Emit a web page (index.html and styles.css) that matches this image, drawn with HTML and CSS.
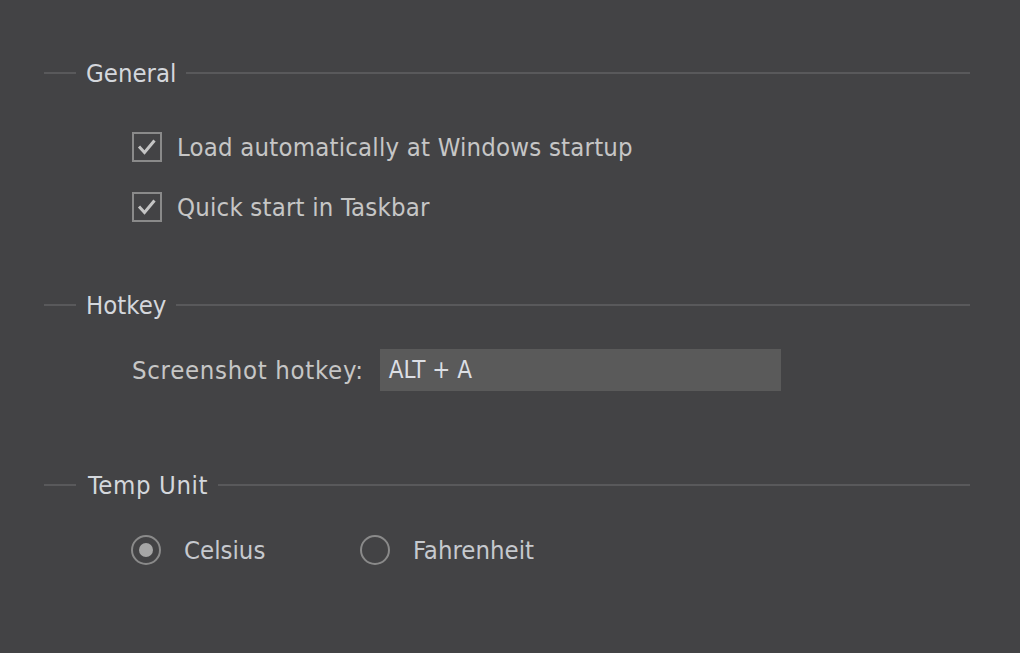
FILE: index.html
```html
<!DOCTYPE html>
<html>
<head>
<meta charset="utf-8">
<link rel="stylesheet" href="styles.css">
</head>
<body>
<div class="panel">
  <section class="group group-general">
    <div class="legend"><span>General</span></div>
    <div class="body">
      <label class="check"><span class="box"><svg viewBox="0 0 26 26" width="26" height="26"><path d="M5 12.5 L10.5 18.5 L20.5 6.5" fill="none" stroke="#c4c4c4" stroke-width="3"/></svg></span><span class="lbl">Load automatically at Windows startup</span></label>
      <label class="check"><span class="box"><svg viewBox="0 0 26 26" width="26" height="26"><path d="M5 12.5 L10.5 18.5 L20.5 6.5" fill="none" stroke="#c4c4c4" stroke-width="3"/></svg></span><span class="lbl">Quick start in Taskbar</span></label>
    </div>
  </section>
  <section class="group group-hotkey">
    <div class="legend"><span>Hotkey</span></div>
    <div class="body">
      <div class="hotkey-row"><span class="lbl hk">Screenshot hotkey:</span><div class="input">ALT + A</div></div>
    </div>
  </section>
  <section class="group group-temp">
    <div class="legend"><span>Temp Unit</span></div>
    <div class="body radios">
      <label class="radio"><span class="circle on"></span><span class="lbl">Celsius</span></label>
      <label class="radio"><span class="circle"></span><span class="lbl">Fahrenheit</span></label>
    </div>
  </section>
</div>
</body>
</html>
```
FILE: styles.css
```css
html, body {
  margin: 0;
  padding: 0;
  background: #434345;
  width: 1020px;
  height: 653px;
  overflow: hidden;
  font-family: "DejaVu Sans Condensed", "DejaVu Sans", sans-serif;
  font-size: 25.5px;
  line-height: 30px;
  color: #c6c6c6;
}
.panel {
  width: 926px;
  margin-left: 44px;
  padding-top: 58px;
}
.legend {
  display: flex;
  align-items: center;
  height: 30px;
  color: #d4d7dc;
}
.legend::before {
  content: "";
  width: 32px;
  height: 2px;
  background: #59595b;
}
.legend::after {
  content: "";
  flex: 1;
  height: 2px;
  background: #59595b;
}
.legend span {
  margin: 0 10px 0 10px;
}
.group-general .body {
  padding: 45px 0 0 88px;
  display: flex;
  flex-direction: column;
  gap: 32px;
}
.check {
  display: flex;
  align-items: center;
  height: 28px;
}
.check .lbl { letter-spacing: 0.2px; }
.box {
  width: 26px;
  height: 26px;
  border: 2px solid #8a8a8a;
  box-sizing: content-box;
  display: flex;
  align-items: center;
  justify-content: center;
  margin-right: 15px;
}
.box svg { display: block; }
.group-hotkey { margin-top: 69px; }
.group-hotkey .body { padding: 29px 0 0 88px; }
.hotkey-row {
  display: flex;
  align-items: center;
}
.hk { letter-spacing: 0.7px; }
.input {
  margin-left: 16px;
  width: 392px;
  height: 42px;
  background: #5a5a5a;
  color: #dcdfe4;
  display: flex;
  align-items: center;
  padding-left: 9px;
  font-size: 24px;
}
.group-temp { margin-top: 79px; }
.group-temp .body {
  padding: 35px 0 0 87px;
  display: flex;
}
.group-temp .legend span { margin-left: 12px; letter-spacing: 0.6px; }
.radio {
  display: flex;
  align-items: center;
  width: 229px;
}
.circle {
  width: 26px;
  height: 26px;
  border: 2px solid #8a8a8a;
  border-radius: 50%;
  position: relative;
  margin-right: 23px;
}
.circle.on::after {
  content: "";
  position: absolute;
  left: 6px; top: 6px;
  width: 14px; height: 14px;
  border-radius: 50%;
  background: #a6a6a6;
}
.radio .lbl { color: #c6c9ce; }
```
